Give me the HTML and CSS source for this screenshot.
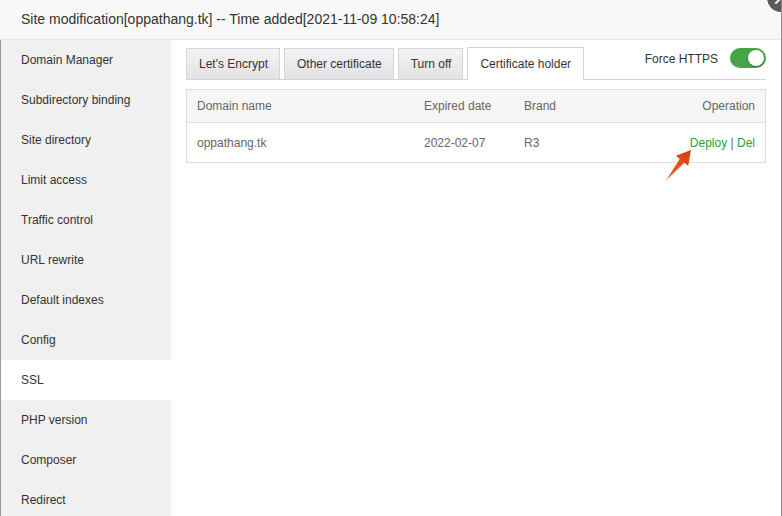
FILE: index.html
```html
<!DOCTYPE html>
<html lang="en">
<head>
    <meta charset="UTF-8">
    <meta name="viewport" content="width=device-width, initial-scale=1.0">
    <title>Site modification</title>
    <link rel="stylesheet" href="styles.css">
</head>
<body>

    <div class="layer">
        <div class="layer-title">Site modification[oppathang.tk] -- Time added[2021-11-09 10:58:24]</div>
        <span class="layer-close"></span>

        <div class="layer-body">
            <ul class="side-menu">
                <li>Domain Manager</li>
                <li>Subdirectory binding</li>
                <li>Site directory</li>
                <li>Limit access</li>
                <li>Traffic control</li>
                <li>URL rewrite</li>
                <li>Default indexes</li>
                <li>Config</li>
                <li class="active">SSL</li>
                <li>PHP version</li>
                <li>Composer</li>
                <li>Redirect</li>
            </ul>

            <div class="panel">
                <div class="tab-bar">
                    <span class="tab">Let's Encrypt</span>
                    <span class="tab">Other certificate</span>
                    <span class="tab">Turn off</span>
                    <span class="tab active">Certificate holder</span>

                    <div class="force-https">
                        <span class="force-label">Force HTTPS</span>
                        <span class="switch on"></span>
                    </div>
                </div>

                <table class="cert-table">
                    <thead>
                        <tr>
                            <th class="col-name">Domain name</th>
                            <th class="col-date">Expired date</th>
                            <th class="col-brand">Brand</th>
                            <th class="col-op">Operation</th>
                        </tr>
                    </thead>
                    <tbody>
                        <tr>
                            <td>oppathang.tk</td>
                            <td>2022-02-07</td>
                            <td>R3</td>
                            <td class="col-op"><a href="#">Deploy</a> | <a href="#">Del</a></td>
                        </tr>
                    </tbody>
                </table>

                <!-- pointer to the deploy link -->
                <svg class="pointer-arrow" width="36" height="38" viewBox="0 0 36 38">
                    <defs>
                        <linearGradient id="arrow-fill" x1="0" y1="1" x2="1" y2="0">
                            <stop offset="0" stop-color="#f0641e"/>
                            <stop offset="1" stop-color="#dc3c14"/>
                        </linearGradient>
                    </defs>
                    <polygon points="5,33.5 18.7,11.9 14.8,8.7 30,3 27.2,18.9 23.3,15.7" fill="url(#arrow-fill)"/>
                </svg>
            </div>
        </div>
    </div>

</body>
</html>
```

FILE: styles.css
```css
body {
    margin: 0;
    font-family: "Liberation Sans", Arial, sans-serif;
    font-size: 12px;
    color: #333;
    background: #fff;
}

.layer {
    position: relative;
    width: 782px;
    height: 516px;
    overflow: hidden;
    box-sizing: border-box;
    border-right: 1px solid #8c8c8c;
    background: #fff;
}

.layer-title {
    height: 39px;
    line-height: 39px;
    padding-left: 21px;
    font-size: 14px;
    color: #333;
    background-color: #f8f8f8;
    border-bottom: 1px solid #e6e6e6;
}

/* close button, mostly outside the window */
.layer-close {
    position: absolute;
    top: -18px;
    right: -16px;
    width: 28px;
    height: 28px;
    border: 2px solid #fff;
    border-radius: 50%;
    background: #5a5a5a;
}

.layer-close::before,
.layer-close::after {
    content: "";
    position: absolute;
    left: 6px;
    top: 13px;
    width: 16px;
    height: 2px;
    background: #fff;
    transform: rotate(45deg);
}

.layer-close::after {
    transform: rotate(-45deg);
}

.layer-body {
    display: flex;
    height: 476px;
    border-left: 1px solid #999;
}

.side-menu {
    list-style: none;
    margin: 0;
    padding: 0;
    width: 170px;
    background-color: #f0f0f0;
}

.side-menu li {
    height: 40px;
    line-height: 40px;
    padding-left: 20px;
    color: #333;
}

.side-menu li.active {
    background-color: #fff;
}

.panel {
    position: relative;
    flex: 1;
    padding: 7px 15px 0 15px;
}

.tab-bar {
    display: flex;
    align-items: flex-end;
    gap: 4px;
    height: 32px;
    border-bottom: 1px solid #d4d4dc;
}

.tab {
    height: 30px;
    line-height: 30px;
    padding: 0 11px 0 12px;
    border: 1px solid #d4d4dc;
    border-bottom: none;
    background: linear-gradient(#f4f4f4, #e2e2e2);
    color: #333;
}

.tab.active {
    height: 32px;
    line-height: 33px;
    padding: 0 12px;
    margin-bottom: -1px;
    background: #fff;
}

.force-https {
    display: flex;
    align-items: center;
    gap: 12px;
    margin-left: auto;
    align-self: flex-start;
    padding-top: 1px;
    color: #333;
}

.force-label {
    margin-top: 1px;
}

.switch {
    position: relative;
    width: 36px;
    height: 20px;
    border-radius: 10px;
    background-color: #ccc;
}

.switch.on {
    background-color: #45a545;
}

.switch::after {
    content: "";
    position: absolute;
    top: 2px;
    left: 2px;
    width: 16px;
    height: 16px;
    border-radius: 50%;
    background: #fff;
    box-shadow: 0 1px 2px rgba(0, 0, 0, 0.3);
}

.switch.on::after {
    left: 18px;
}

.cert-table {
    width: 100%;
    margin-top: 9px;
    border-collapse: collapse;
    border: 1px solid #ddd;
    color: #666;
}

.cert-table th {
    height: 32px;
    padding: 0 10px;
    text-align: left;
    font-weight: normal;
    background-color: #f6f6f6;
    border-bottom: 1px solid #ddd;
}

.cert-table td {
    height: 39px;
    padding: 0 10px;
}

.col-name { width: 207px; }
.col-date { width: 80px; }
.col-brand { width: 100px; }

.cert-table .col-op {
    text-align: right;
}

.cert-table a {
    color: #20a53a;
    text-decoration: none;
}

.pointer-arrow {
    position: absolute;
    left: 490px;
    top: 107px;
}
```
